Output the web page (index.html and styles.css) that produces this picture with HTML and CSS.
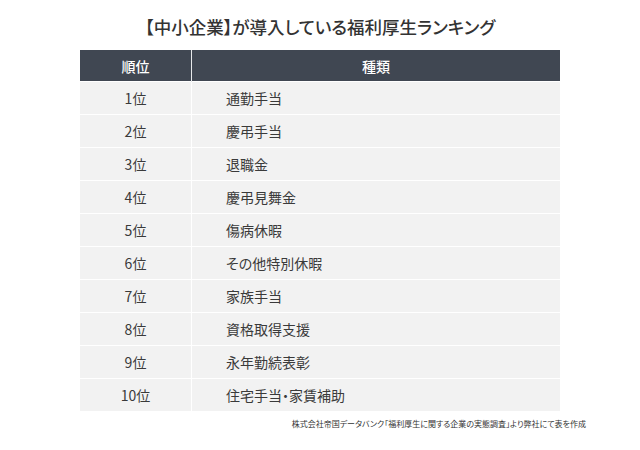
FILE: index.html
```html
<!DOCTYPE html>
<html lang="ja">
<head>
<meta charset="utf-8">
<link rel="stylesheet" href="styles.css">
</head>
<body>
<div class="page">
  <h1 class="title">【中小企業】が導入している福利厚生ランキング</h1>
  <table class="rank">
    <thead>
      <tr><th class="c1">順位</th><th class="c2">種類</th></tr>
    </thead>
    <tbody>
      <tr><td class="c1">1位</td><td class="c2">通勤手当</td></tr>
      <tr><td class="c1">2位</td><td class="c2">慶弔手当</td></tr>
      <tr><td class="c1">3位</td><td class="c2">退職金</td></tr>
      <tr><td class="c1">4位</td><td class="c2">慶弔見舞金</td></tr>
      <tr><td class="c1">5位</td><td class="c2">傷病休暇</td></tr>
      <tr><td class="c1">6位</td><td class="c2">その他特別休暇</td></tr>
      <tr><td class="c1">7位</td><td class="c2">家族手当</td></tr>
      <tr><td class="c1">8位</td><td class="c2">資格取得支援</td></tr>
      <tr><td class="c1">9位</td><td class="c2">永年勤続表彰</td></tr>
      <tr><td class="c1">10位</td><td class="c2">住宅手当・家賃補助</td></tr>
    </tbody>
  </table>
  <p class="note">株式会社帝国データバンク「福利厚生に関する企業の実態調査」より弊社にて表を作成</p>
</div>
</body>
</html>
```

FILE: styles.css
```css
html, body {
  margin: 0;
  padding: 0;
  background: #ffffff;
}
.page {
  width: 640px;
  padding-top: 15px;
  font-family: "Noto Sans CJK JP", "Noto Sans", sans-serif;
  color: #333333;
  font-feature-settings: "palt";
}
.title {
  margin: 0 0 11px;
  text-align: center;
  font-size: 17.5px;
  line-height: 24px;
  font-weight: 500;
  color: #333333;
}
.rank {
  margin: 0 auto;
  width: 480px;
  border-collapse: collapse;
  table-layout: fixed;
}
.rank th {
  background: #404752;
  color: #ffffff;
  font-size: 14px;
  font-weight: 500;
  height: 31px;
  padding: 0;
  text-align: center;
}
.rank td {
  background: #f2f2f2;
  font-size: 14px;
  font-weight: 400;
  height: 32px;
  padding: 0;
  border-top: 1px solid #ffffff;
  color: #3a3a3a;
}
.rank .c1 {
  width: 111px;
  text-align: center;
  border-right: 1px solid #e6e8ea;
}
.rank td.c1 {
  border-right: 1px solid #ffffff;
}
.rank td.c2 {
  padding-left: 34px;
}
.note {
  margin: 7px 54px 0 0;
  text-align: right;
  font-size: 8px;
  line-height: 12px;
  color: #333333;
}
```
